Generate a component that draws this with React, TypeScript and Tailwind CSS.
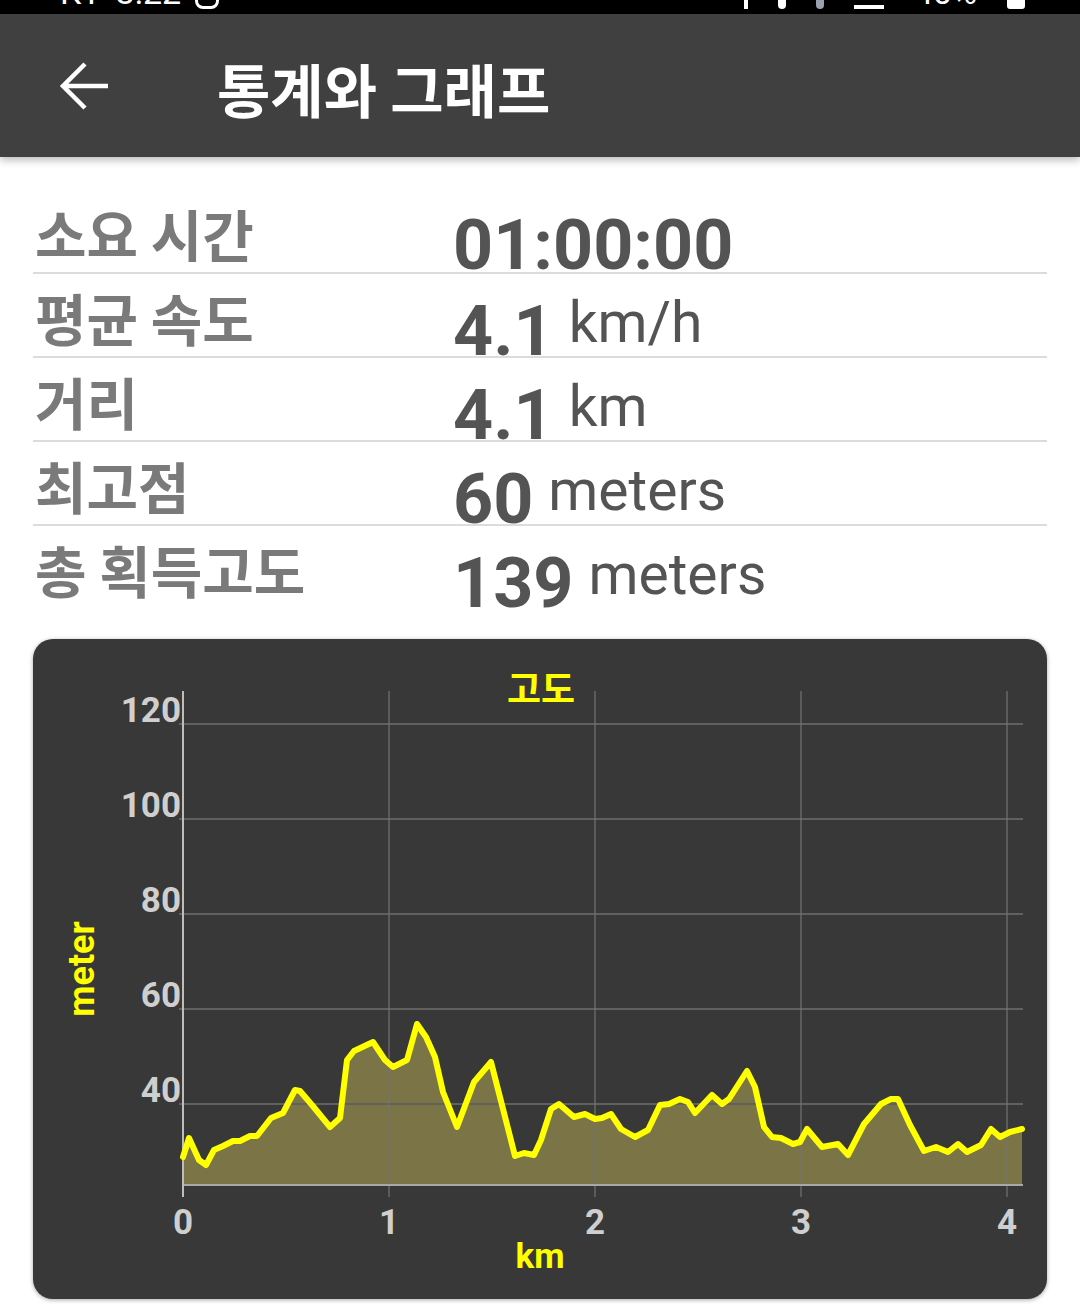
import React from 'react';

const PTS: [number, number][] = [
  [183, 1155], [189, 1136], [199, 1158], [206, 1163], [214, 1148], [223, 1144], [233, 1139], [240, 1139],
  [250, 1134], [257, 1134], [271, 1116], [283, 1111], [295, 1088], [300, 1089], [312, 1103], [330, 1125],
  [340, 1116], [347, 1058], [354, 1049], [373, 1040], [385, 1058], [393, 1065], [407, 1058], [417, 1022],
  [426, 1035], [435, 1055], [443, 1090], [457, 1125], [474, 1080], [491, 1060], [502, 1103], [515, 1154],
  [524, 1151], [534, 1153], [541, 1138], [551, 1107], [559, 1102], [574, 1115], [585, 1112], [595, 1117],
  [602, 1116], [611, 1112], [621, 1127], [635, 1135], [648, 1128], [660, 1103], [669, 1102], [680, 1097],
  [688, 1100], [695, 1111], [712, 1093], [722, 1102], [729, 1097], [747, 1069], [755, 1085], [764, 1125],
  [772, 1135], [781, 1136], [793, 1142], [800, 1140], [807, 1127], [822, 1145], [838, 1142], [848, 1153],
  [864, 1122], [881, 1102], [891, 1097], [898, 1097], [910, 1123], [924, 1149], [936, 1145], [948, 1150],
  [958, 1142], [967, 1150], [981, 1143], [991, 1127], [1000, 1135], [1010, 1130], [1022, 1127],
];

const STATS = [
  { label: '소요 시간', value: '01:00:00', unit: '' },
  { label: '평균 속도', value: '4.1', unit: 'km/h' },
  { label: '거리', value: '4.1', unit: 'km' },
  { label: '최고점', value: '60', unit: 'meters' },
  { label: '총 획득고도', value: '139', unit: 'meters' },
];

const StatusBar: React.FC = () => (
  <div className="h-[14px] bg-black overflow-hidden flex items-end justify-between pl-[60px] pr-[55px] text-white">
    <div className="flex items-end gap-[14px] pb-[5px] text-[34px] leading-none font-['Roboto',sans-serif]">
      <span>KT</span>
      <span>3:22</span>
      <span className="w-[24px] h-[30px] border-[3px] border-white rounded-[8px]" />
    </div>
    <div className="flex items-end gap-[30px] pb-[5px] text-[34px] leading-none font-['Roboto',sans-serif]">
      <span className="w-[4px] h-[30px] bg-white" />
      <span className="w-[8px] h-[30px] bg-white rounded-b-full" />
      <span className="w-[8px] h-[30px] bg-gray-400 rounded-b-full" />
      <span className="w-[30px] h-[30px] border-b-[4px] border-white" />
      <span>40%</span>
      <span className="w-[18px] h-[30px] bg-white rounded-[3px]" />
    </div>
  </div>
);

const Header: React.FC = () => (
  <div className="relative z-10 h-[143px] bg-[#404040] flex items-center pt-[4px] shadow-[0_3px_8px_rgba(0,0,0,0.28)]">
    <svg width="50" height="50" viewBox="0 0 50 50" className="ml-[59px] mb-[3px]">
      <path d="M49 25H5 M26 3L4 25l22 22" stroke="#ffffff" strokeWidth="4.5" fill="none" />
    </svg>
    <h1 className="ml-[108px] text-[58px] leading-none font-bold text-white font-['Noto_Sans_CJK_KR',sans-serif]">
      통계와 그래프
    </h1>
  </div>
);

const StatRow: React.FC<{ label: string; value: string; unit: string; last: boolean }> = ({ label, value, unit, last }) => (
  <div className={`h-[84px] flex items-start ${last ? '' : 'border-b-2 border-[#dcdcdc]'}`}>
    <div className="w-[420px] pl-[2px] pt-[15px] text-[56px] leading-none font-bold text-[#7a7a7a] font-['Noto_Sans_CJK_KR',sans-serif]">
      {label}
    </div>
    <div className="pt-[20px] text-[70px] leading-none text-[#545454] font-['Roboto',sans-serif] whitespace-nowrap">
      <span className="font-bold">{value}</span>
      {unit && <span className="ml-[15px] text-[57px] align-[13px]">{unit}</span>}
    </div>
  </div>
);

const ElevationChart: React.FC = () => {
  const line = PTS.map((p) => p.join(',')).join(' ');
  const area = `183,1183 ${line} 1022,1183`;
  const yTicks = [
    { v: '120', y: 722 },
    { v: '100', y: 817 },
    { v: '80', y: 912 },
    { v: '60', y: 1007 },
    { v: '40', y: 1102 },
  ];
  const xTicks = [
    { v: '0', x: 183 },
    { v: '1', x: 389 },
    { v: '2', x: 595 },
    { v: '3', x: 801 },
    { v: '4', x: 1007 },
  ];
  return (
    <div className="mx-[33px] mt-[29px] w-[1014px] h-[660px] rounded-[20px] bg-[#383838] shadow-[0_1px_4px_rgba(0,0,0,0.35)] overflow-hidden">
      <svg width="1014" height="660" viewBox="33 637 1014 660" className="block">
        <polygon points={area} fill="#7a7446" />
        {yTicks.map((t) => (
          <line key={t.v} x1="179" x2="1023" y1={t.y} y2={t.y} stroke="#606060" strokeWidth="2" />
        ))}
        {xTicks.slice(1).map((t) => (
          <line key={t.v} x1={t.x} x2={t.x} y1="689" y2="1195" stroke="#747474" strokeWidth="1.2" />
        ))}
        <line x1="183" x2="1023" y1="1183" y2="1183" stroke="#a8a8a8" strokeWidth="2" />
        <line x1="183" x2="183" y1="689" y2="1195" stroke="#bdbdbd" strokeWidth="2" />
        <polyline points={line} fill="none" stroke="#ffff00" strokeWidth="6" strokeLinejoin="round" strokeLinecap="round" />
        <g fontFamily="Roboto, sans-serif" fontWeight="700" fontSize="35" fill="#cfcfcf">
          {yTicks.map((t) => (
            <text key={t.v} x="181" y={t.y - 2} textAnchor="end">{t.v}</text>
          ))}
          {xTicks.map((t) => (
            <text key={t.v} x={t.x} y="1232" textAnchor="middle">{t.v}</text>
          ))}
        </g>
        <text x="541" y="701" textAnchor="middle" fontFamily="'Noto Sans CJK KR', sans-serif" fontWeight="700" fontSize="37" fill="#ffff00">고도</text>
        <text x="540" y="1266" textAnchor="middle" fontFamily="Roboto, sans-serif" fontWeight="700" fontSize="35" fill="#ffff00">km</text>
        <text transform="translate(94,967) rotate(-90)" textAnchor="middle" fontFamily="Roboto, sans-serif" fontWeight="700" fontSize="36" fill="#ffff00">meter</text>
      </svg>
    </div>
  );
};

export default function App() {
  return (
    <div className="w-[1080px] h-[1308px] bg-white overflow-hidden font-['Roboto','Noto_Sans_CJK_KR',sans-serif]">
      <StatusBar />
      <Header />
      <div className="pt-[33px] mx-[33px]">
        {STATS.map((s, i) => (
          <StatRow key={s.label} {...s} last={i === STATS.length - 1} />
        ))}
      </div>
      <ElevationChart />
    </div>
  );
}
